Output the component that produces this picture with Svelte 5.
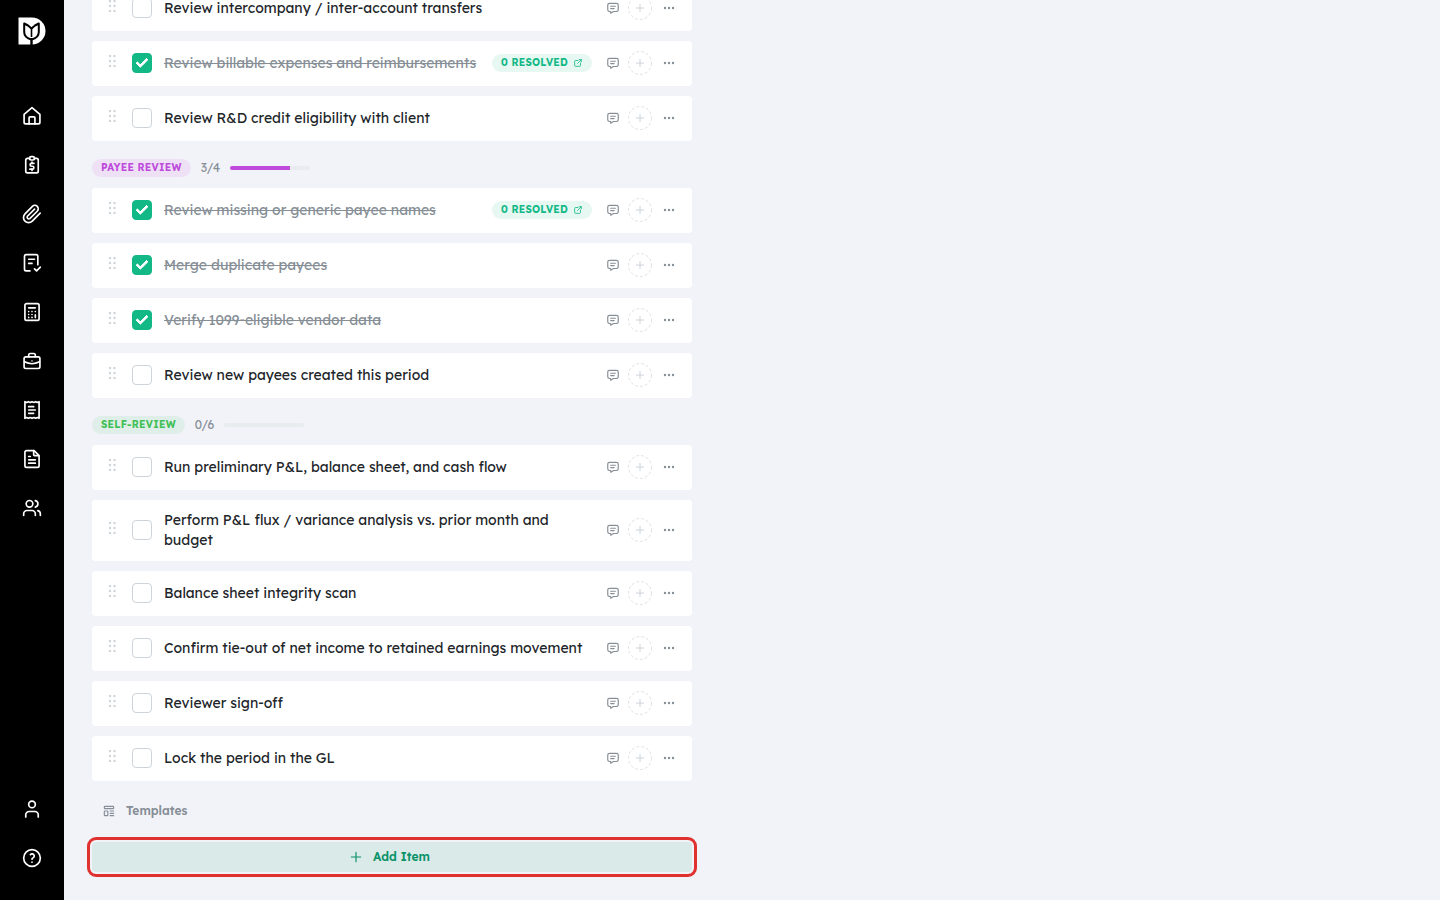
<script lang="ts">
  interface Task {
    id: number;
    title: string;
    done?: boolean;
    resolved?: number;
  }

  interface Group {
    name: string;
    tone: string;
    tasks: Task[];
  }

  // Tasks of the section whose header is scrolled out of view
  let leading: Task[] = $state([
    { id: 1, title: 'Review intercompany / inter-account transfers' },
    { id: 2, title: 'Review billable expenses and reimbursements', done: true, resolved: 0 },
    { id: 3, title: 'Review R&D credit eligibility with client' },
  ]);

  let groups: Group[] = $state([
    {
      name: 'Payee review',
      tone: 'grape',
      tasks: [
        { id: 4, title: 'Review missing or generic payee names', done: true, resolved: 0 },
        { id: 5, title: 'Merge duplicate payees', done: true },
        { id: 6, title: 'Verify 1099-eligible vendor data', done: true },
        { id: 7, title: 'Review new payees created this period' },
      ],
    },
    {
      name: 'Self-review',
      tone: 'green',
      tasks: [
        { id: 8, title: 'Run preliminary P&L, balance sheet, and cash flow' },
        { id: 9, title: 'Perform P&L flux / variance analysis vs. prior month and budget' },
        { id: 10, title: 'Balance sheet integrity scan' },
        { id: 11, title: 'Confirm tie-out of net income to retained earnings movement' },
        { id: 12, title: 'Reviewer sign-off' },
        { id: 13, title: 'Lock the period in the GL' },
      ],
    },
  ]);

  const nav = [
    { label: 'Home', paths: ['M2.500 10 12 2l9.500 8v9.500a2 2 0 0 1-2 2h-15a2 2 0 0 1-2-2z', 'M8.500 21.500V14a1 1 0 0 1 1-1h5a1 1 0 0 1 1 1v7.500'] },
    {
      label: 'Billing',
      paths: [
        'M9 4H6.500a2 2 0 0 0-2 2v13.500a2 2 0 0 0 2 2h11a2 2 0 0 0 2-2V6a2 2 0 0 0-2-2H15',
        'M9 4a2 2 0 0 1 2-2h2a2 2 0 0 1 2 2a2 2 0 0 1-2 2h-2a2 2 0 0 1-2-2z',
        'M14.500 10h-3a1.700 1.700 0 0 0 0 3.500h1a1.700 1.700 0 0 1 0 3.500h-3',
        'M12 17v1.500m0-10V10',
      ],
    },
    { label: 'Attachments', paths: ['m21.800 11-9.500 9.500a6.100 6.100 0 0 1-8.700-8.700l8.900-8.900a4.100 4.100 0 1 1 5.800 5.800l-8.900 8.900a2.100 2.100 0 0 1-2.900-2.900l8.600-8.600'] },
    { label: 'Checklists', paths: ['M9.500 21.500H5a2 2 0 0 1-2-2V4a2 2 0 0 1 2-2h12a2 2 0 0 1 2 2v10', 'M8 7.500h7m-7 5h4', 'm15 19 2.500 2.500L22 17'] },
    {
      label: 'Calculator',
      paths: [
        'M3.500 4a2 2 0 0 1 2-2h13a2 2 0 0 1 2 2v16a2 2 0 0 1-2 2h-13a2 2 0 0 1-2-2z',
        'M8 7h8',
        'M8 11.500v.01M12 11.500v.01M16 11.500v.01M8 15v.01M12 15v.01M8 18.500v.01M12 18.500v.01M16 15.500v3',
      ],
    },
    {
      label: 'Clients',
      paths: ['M2.500 9a2 2 0 0 1 2-2h15a2 2 0 0 1 2 2v10a2 2 0 0 1-2 2h-15a2 2 0 0 1-2-2z', 'M8 7V5a2 2 0 0 1 2-2h4a2 2 0 0 1 2 2v2', 'M12 12v.01', 'M3 13a20 20 0 0 0 18 0'],
    },
    { label: 'Receipts', paths: ['M3.500 2l2 1 2.200-1 2.200 1L12 2l2.200 1 2.200-1 2.100 1 2-1v20l-2-1-2.100 1-2.200-1-2.200 1-2.100-1-2.200 1-2.200-1-2 1z', 'M8 8h6m-6 4h8m-8 4h6'] },
    { label: 'Reports', paths: ['M14 2v5a1 1 0 0 0 1 1h5', 'M18.500 22h-13a2 2 0 0 1-2-2V4a2 2 0 0 1 2-2h9l6 6v12a2 2 0 0 1-2 2z', 'M8 9h2m-2 4h8m-8 4h8'] },
    { label: 'Team', paths: ['M5 7a4 4 0 1 0 8 0a4 4 0 1 0-8 0', 'M2 21v-2a4 4 0 0 1 4-4h6a4 4 0 0 1 4 4v2', 'M16 3.100a4 4 0 0 1 0 7.800', 'M22 21v-2a4 4 0 0 0-3-3.900'] },
  ];

  const footerNav = [
    { label: 'Account', paths: ['M8 6.500a4 4 0 1 0 8 0a4 4 0 0 0-8 0', 'M4.500 21.500v-2.500a4 4 0 0 1 4-4h7a4 4 0 0 1 4 4v2.500'] },
    { label: 'Help', paths: ['M2 12a10 10 0 1 0 20 0a10 10 0 1 0-20 0', 'M12 17v.01', 'M12 13.500a1.500 1.500 0 0 1 1-1.500a2.600 2.600 0 1 0-3-4'] },
  ];

  const doneCount = (group: Group) => group.tasks.filter((t) => t.done).length;
</script>

{#snippet icon(paths: string[])}
  <svg class="icon" viewBox="0 0 24 24" aria-hidden="true">
    {#each paths as d}
      <path {d} />
    {/each}
  </svg>
{/snippet}

{#snippet row(task: Task)}
  <li class="task" class:done={task.done}>
    <svg class="grip" viewBox="0 0 8 12" aria-hidden="true">
      {#each [1, 6, 11] as y}
        <circle cx="2" cy={y} r="1.200" />
        <circle cx="6.500" cy={y} r="1.200" />
      {/each}
    </svg>
    <input type="checkbox" id="task-{task.id}" bind:checked={task.done} />
    <label for="task-{task.id}">{task.title}</label>
    {#if task.resolved !== undefined}
      <a class="badge resolved" href="#resolved">
        {task.resolved} Resolved
        {@render icon(['M12 6H6a2 2 0 0 0-2 2v10a2 2 0 0 0 2 2h10a2 2 0 0 0 2-2v-6', 'm11 13 9-9', 'M15 4h5v5'])}
      </a>
    {/if}
    <div class="actions">
      <button class="comment" aria-label="Comments">
        {@render icon(['M8 9h8m-8 4h6', 'M18 4a3 3 0 0 1 3 3v8a3 3 0 0 1-3 3h-5l-5 3v-3H6a3 3 0 0 1-3-3V7a3 3 0 0 1 3-3z'])}
      </button>
      <button class="assign" aria-label="Assign">
        <svg viewBox="0 0 24 24" aria-hidden="true">
          <circle cx="12" cy="12" r="11.500" />
          <path d="M12 8v8m-4-4h8" />
        </svg>
      </button>
      <button class="more" aria-label="More">
        <svg viewBox="0 0 12 4" aria-hidden="true">
          <circle cx="2" cy="2" r="1.200" />
          <circle cx="6" cy="2" r="1.200" />
          <circle cx="10" cy="2" r="1.200" />
        </svg>
      </button>
    </div>
  </li>
{/snippet}

<div class="app">
  <nav class="sidebar" aria-label="Main">
    <a class="logo" href="#top" aria-label="Dashboard">
      <svg viewBox="0 0 28 28" aria-hidden="true">
        <path d="M.5.500H14a13.300 13.300 0 0 1 0 27H.5z" fill="#fff" />
        <path
          d="M6.200 6.500 10 8.500l3.500 3 3.500-3 3.800-2V15c0 4-3 6.500-7.300 7.500C9.200 21.500 6.200 19 6.200 15z"
          fill="#fff"
          stroke="#000"
          stroke-width="2"
          stroke-linejoin="round"
        />
        <path d="M13.500 11v9" fill="none" stroke="#000" stroke-width="1.600" />
        <path d="M13.500 21v7" fill="none" stroke="#000" stroke-width="2.400" />
      </svg>
    </a>
    <div class="links">
      {#each nav as item}
        <a href="#{item.label.toLowerCase()}" aria-label={item.label}>{@render icon(item.paths)}</a>
      {/each}
    </div>
    <div class="links bottom">
      {#each footerNav as item}
        <a href="#{item.label.toLowerCase()}" aria-label={item.label}>{@render icon(item.paths)}</a>
      {/each}
    </div>
  </nav>

  <main>
    <div class="checklist">
      <ul>
        {#each leading as task (task.id)}
          {@render row(task)}
        {/each}
      </ul>

      {#each groups as group}
        <header class={group.tone}>
          <span class="badge">{group.name}</span>
          <span class="count">{doneCount(group)}/{group.tasks.length}</span>
          <div class="track">
            <div class="bar" style="width: {(doneCount(group) / group.tasks.length) * 100}%"></div>
          </div>
        </header>
        <ul>
          {#each group.tasks as task (task.id)}
            {@render row(task)}
          {/each}
        </ul>
      {/each}

      <button class="templates">
        {@render icon(['M4 5a1 1 0 0 1 1-1h14a1 1 0 0 1 1 1v2a1 1 0 0 1-1 1H5a1 1 0 0 1-1-1z', 'M4 13a1 1 0 0 1 1-1h4a1 1 0 0 1 1 1v6a1 1 0 0 1-1 1H5a1 1 0 0 1-1-1z', 'M14 12h6m-6 4h6m-6 4h6'])}
        Templates
      </button>
      <button class="add">
        {@render icon(['M12 4v16m-8-8h16'])}
        Add Item
      </button>
    </div>
  </main>
</div>

<style>
  :global(body) {
    background: #f2f3f9;
  }

  .app {
    display: flex;
    height: 100vh;
    overflow: hidden;
    color: #212529;
    font-family: Lexend, Inter, sans-serif;
    font-size: 14px;
    line-height: 20px;
  }

  .icon {
    display: block;
    fill: none;
    stroke: currentColor;
    stroke-width: 2;
    stroke-linecap: round;
    stroke-linejoin: round;
  }

  button {
    display: flex;
    align-items: center;
    padding: 0;
    border: 0;
    background: none;
    font: inherit;
    cursor: pointer;
  }

  .sidebar {
    display: flex;
    flex-direction: column;
    flex: 0 0 64px;
    box-sizing: border-box;
    padding: 17px 0 18px;
    background: #000;
  }

  .logo {
    align-self: center;
    margin-bottom: 46px;
  }

  .logo svg {
    display: block;
    width: 28px;
    height: 28px;
  }

  .links a {
    display: flex;
    align-items: center;
    justify-content: center;
    height: 49px;
    color: #fff;
  }

  .links .icon {
    width: 20px;
    height: 20px;
  }

  .bottom {
    margin-top: auto;
  }

  main {
    flex: 1;
    padding: 0 28px;
    overflow: hidden;
  }

  /* The list is shown scrolled down to its end. */
  .checklist {
    max-width: 600px;
    margin-top: -14px;
  }

  ul {
    display: flex;
    flex-direction: column;
    gap: 10px;
    margin: 0;
    padding: 0;
    list-style: none;
  }

  .task {
    display: flex;
    align-items: center;
    box-sizing: border-box;
    min-height: 45px;
    padding: 10px 17px 11px 16px;
    border-radius: 4px;
    background: #fff;
  }

  .grip {
    flex: none;
    width: 8px;
    height: 12px;
    margin: 0 16px 4px 0;
    fill: #ced4da;
  }

  .task input {
    display: grid;
    place-items: center;
    flex: none;
    box-sizing: border-box;
    width: 20px;
    height: 20px;
    margin: 0 12px 0 0;
    border: 1px solid #ced4da;
    border-radius: 4px;
    appearance: none;
    background: #fff;
  }

  .task input:checked {
    border-color: #12b886;
    background: #12b886;
  }

  .task input:checked::before {
    content: '';
    box-sizing: border-box;
    width: 12px;
    height: 7px;
    margin-bottom: 3px;
    border: solid #fff;
    border-width: 0 0 3px 3px;
    border-radius: 1px;
    transform: rotate(-45deg);
  }

  .task label {
    flex: 1;
  }

  .done label {
    color: #868e96;
    text-decoration: line-through;
  }

  .badge {
    display: flex;
    align-items: center;
    height: 18px;
    padding: 0 9px;
    border-radius: 9px;
    font-size: 10px;
    font-weight: 700;
    letter-spacing: 0.025em;
    text-transform: uppercase;
    white-space: nowrap;
  }

  .resolved {
    gap: 5px;
    background: #e7f8f3;
    color: #12b886;
    text-decoration: none;
  }

  .resolved .icon {
    width: 10px;
    height: 10px;
  }

  .actions {
    display: flex;
    align-items: center;
    gap: 8px;
    margin-left: 14px;
    color: #868e96;
  }

  .actions button {
    color: inherit;
  }

  .comment .icon {
    width: 14px;
    height: 14px;
  }

  .assign svg {
    width: 24px;
    height: 24px;
    fill: none;
    stroke: #ced4da;
  }

  .assign circle {
    stroke: #dee2e6;
    stroke-dasharray: 3 2;
  }

  .more {
    padding-left: 3px;
  }

  .more svg {
    width: 12px;
    height: 4px;
    fill: currentColor;
  }

  header {
    display: flex;
    align-items: center;
    gap: 10px;
    height: 18px;
    padding: 18px 0 11px;
  }

  .grape .badge {
    background: #eee1f6;
    color: #be4bdb;
  }

  .green .badge {
    background: #e0eee9;
    color: #40c057;
  }

  .count {
    color: #868e96;
    font-size: 12px;
  }

  .track {
    width: 80px;
    height: 4px;
    overflow: hidden;
    border-radius: 2px;
    background: #e9ecef;
  }

  .bar {
    height: 100%;
    background: #be4bdb;
  }

  .templates {
    gap: 10px;
    height: 30px;
    margin: 15px 0 16px;
    padding: 0 10px;
    color: #868e96;
    font-size: 12px;
    font-weight: 600;
  }

  .templates .icon,
  .add .icon {
    width: 14px;
    height: 14px;
  }

  .add {
    justify-content: center;
    gap: 10px;
    width: 100%;
    height: 30px;
    padding-right: 5px;
    border-radius: 4px;
    outline: 3px solid #e03131;
    outline-offset: 2px;
    background: #daeae9;
    color: #099268;
    font-size: 12px;
    font-weight: 600;
  }
</style>
